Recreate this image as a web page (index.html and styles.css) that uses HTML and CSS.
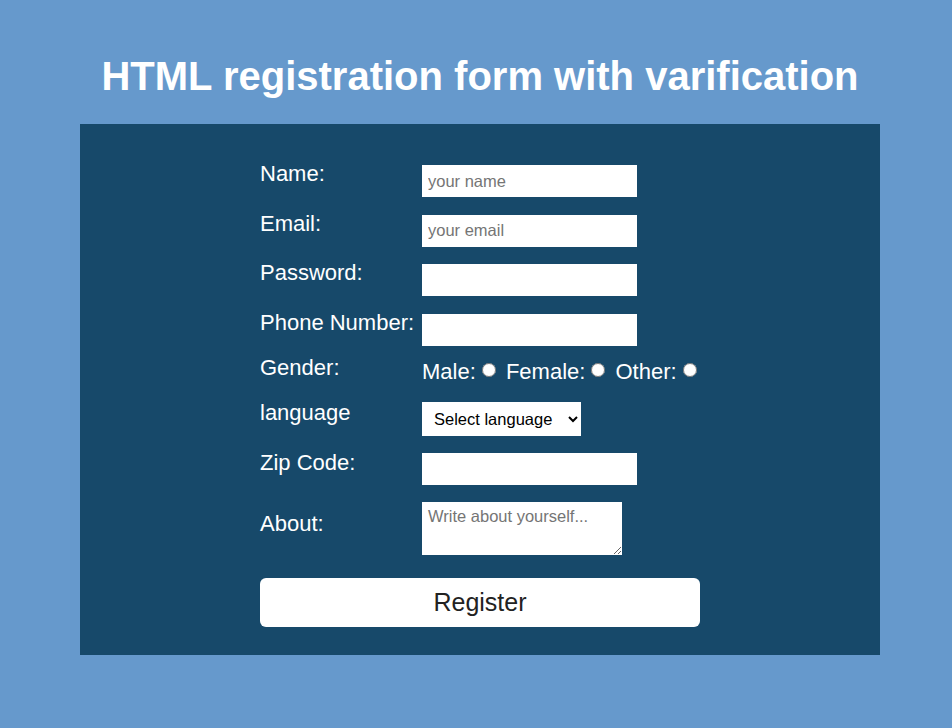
FILE: index.html
```html
<!DOCTYPE html>
<html lang="en">
<head>
<meta charset="utf-8">
<title>HTML registration form</title>
<link rel="stylesheet" href="styles.css">
</head>
<body>
<div class="page">
  <h1 class="title">HTML registration form with varification</h1>
  <div class="panel">
    <form class="form">
      <div class="row">
        <label class="label" for="name">Name:</label>
        <input class="text" id="name" type="text" placeholder="your name">
      </div>
      <div class="row">
        <label class="label" for="email">Email:</label>
        <input class="text" id="email" type="email" placeholder="your email">
      </div>
      <div class="row">
        <label class="label" for="password">Password:</label>
        <input class="text" id="password" type="password">
      </div>
      <div class="row row-phone">
        <label class="label" for="phone">Phone Number:</label>
        <input class="text" id="phone" type="text">
      </div>
      <div class="row row-gender">
        <span class="label">Gender:</span>
        <div class="options">Male:<input type="radio" name="gender"> Female:<input type="radio" name="gender"> Other:<input type="radio" name="gender"></div>
      </div>
      <div class="row row-lang">
        <label class="label" for="lang">language</label>
        <select class="select" id="lang">
          <option>Select language</option>
          <option>English</option>
          <option>Hindi</option>
        </select>
      </div>
      <div class="row row-zip">
        <label class="label" for="zip">Zip Code:</label>
        <input class="text text-zip" id="zip" type="text">
      </div>
      <div class="row row-about">
        <label class="label label-about" for="about">About:</label>
        <textarea class="area" id="about" placeholder="Write about yourself..."></textarea>
      </div>
      <button class="btn" type="button">Register</button>
    </form>
  </div>
</div>
</body>
</html>
```

FILE: styles.css
```css
html, body {
  margin: 0;
  padding: 0;
  background: #6699cc;
  font-family: "Liberation Sans", Arial, sans-serif;
}

.page {
  width: 800px;
  margin-left: 80px;
  padding-top: 52.5px;
}

.title {
  margin: 0 0 25.5px;
  text-align: center;
  color: #ffffff;
  font-size: 40px;
  font-weight: bold;
  line-height: 46px;
}

.panel {
  background: #17496a;
}

.form {
  width: 440px;
  margin: 0 auto;
  padding: 37px 0 28px;
}

.row {
  display: flex;
  align-items: flex-start;
  margin-bottom: 13.5px;
}

.label {
  flex: none;
  width: 162px;
  color: #ffffff;
  font-size: 22px;
  line-height: 25px;
}

.text {
  display: block;
  box-sizing: border-box;
  width: 215px;
  height: 32px;
  margin: 4px 0 0;
  padding: 0 6px;
  border: none;
  background: #ffffff;
  font-family: "Liberation Sans", Arial, sans-serif;
  font-size: 16.5px;
  color: #000;
  outline: none;
}

.text::placeholder,
.area::placeholder {
  color: #757575;
}

.row-phone {
  margin-bottom: 9.5px;
}

.row-gender {
  margin-bottom: 16.5px;
}

.options {
  height: 25px;
  margin-top: 3.5px;
  color: #ffffff;
  font-size: 22px;
  line-height: 25px;
  white-space: nowrap;
}

.options input {
  width: 14px;
  height: 14px;
  margin: 3px 4px 0 6px;
  vertical-align: 2px;
}

.row-lang {
  margin-bottom: 14px;
}

.select {
  display: block;
  box-sizing: border-box;
  width: 159px;
  height: 34px;
  margin-top: 2px;
  padding: 0 4px 0 8px;
  border: none;
  background: #ffffff;
  color: #000;
  font-family: "Liberation Sans", Arial, sans-serif;
  font-size: 16.5px;
}

.row-zip {
  margin-bottom: 17px;
}

.text-zip {
  margin-top: 3px;
}

.row-about {
  margin-bottom: 23px;
}

.label-about {
  margin-top: 9px;
}

.area {
  display: block;
  box-sizing: border-box;
  width: 200px;
  height: 53px;
  margin: 0;
  padding: 5px 6px;
  border: none;
  background: #ffffff;
  font-family: "Liberation Sans", Arial, sans-serif;
  font-size: 16.5px;
  resize: both;
}

.btn {
  display: block;
  width: 440px;
  height: 49px;
  margin: 0;
  padding: 0;
  border: none;
  border-radius: 6px;
  background: #ffffff;
  color: #222222;
  font-family: "Liberation Sans", Arial, sans-serif;
  font-size: 25px;
  cursor: pointer;
}
```
